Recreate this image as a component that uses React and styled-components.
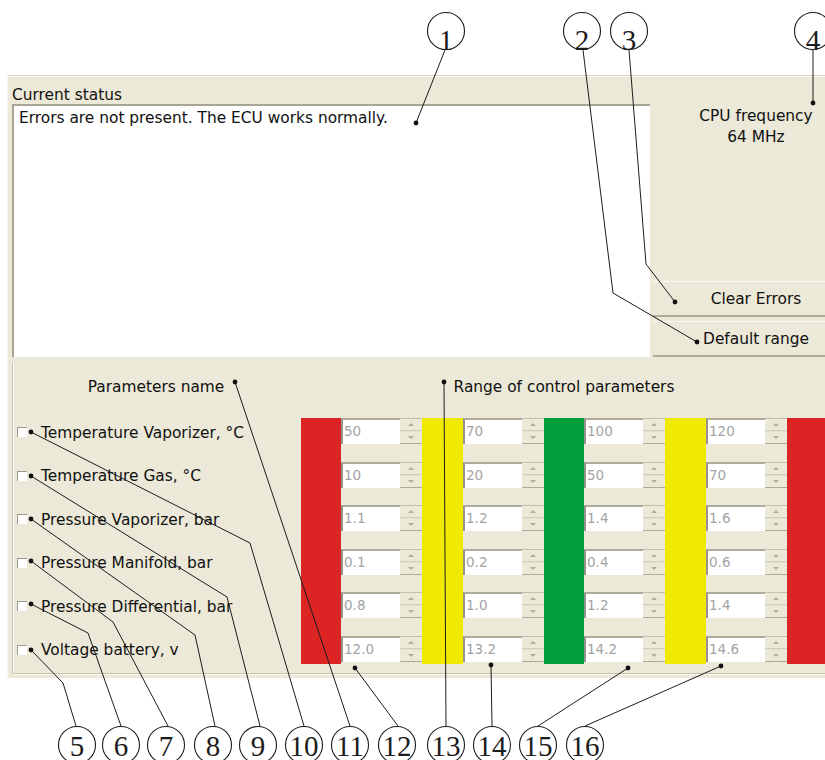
import React from 'react';
import styled, { createGlobalStyle } from 'styled-components';

const GlobalStyle = createGlobalStyle`
  html, body { margin: 0; padding: 0; background: #ffffff; }
  body { font-family: "DejaVu Sans", Verdana, sans-serif; }
`;

const PANEL_BG = '#ECE9D8';

const Page = styled.div`
  position: relative;
  width: 825px;
  height: 760px;
  overflow: hidden;
  background: #ffffff;
  padding-top: 75px;
  box-sizing: border-box;
`;

const Panel = styled.div`
  margin-left: 7px;
  width: 855px;
  height: 603px;
  box-sizing: border-box;
  background: ${PANEL_BG};
  border-top: 1px solid #d6d2bf;
  border-left: 1px solid #f7f6f0;
  box-shadow: inset 0 1px 0 #faf9f2;
  padding: 8px 0 4px 4px;
  display: flex;
  flex-direction: column;
  font-size: 15.4px;
  color: #111;
`;

const Caption = styled.div`
  height: 20px;
  box-sizing: border-box;
  padding-top: 1px;
  line-height: 20px;
`;

const TopRow = styled.div`
  display: flex;
  height: 253px;
`;

const StatusBox = styled.div`
  width: 638px;
  box-sizing: border-box;
  background: #ffffff;
  border-top: 2px solid #a8a597;
  border-left: 2px solid #a8a597;
  padding: 3px 5px;
  line-height: 18px;
`;

const SideColumn = styled.div`
  margin-left: 3px;
  width: 206px;
  display: flex;
  flex-direction: column;
  gap: 4px;
`;

const CpuInfo = styled.div`
  text-align: center;
  line-height: 21px;
  padding-top: 2px;
  margin-bottom: auto;
`;

const SideButton = styled.div`
  height: 36px;
  box-sizing: border-box;
  display: flex;
  align-items: center;
  justify-content: center;
  padding-top: 1px;
  border-top: 1px solid #faf9f3;
  border-bottom: 2px solid #aeaa97;
  background: ${PANEL_BG};
`;

const ParamsGroup = styled.div`
  margin-top: 5px;
  flex: 1;
  border-left: 1px solid #c8c4ae;
  border-bottom: 1px solid #c8c4ae;
  box-shadow: 1px 1px 0 #fbfaf4, inset 1px 0 0 #fbfaf4;
  padding: 16px 0 0 4px;
`;

const HeaderRow = styled.div`
  display: grid;
  grid-template-columns: 278px 526px;
  column-gap: 6px;
  line-height: 18px;
  text-align: center;
  white-space: nowrap;
`;

const ParamGrid = styled.div`
  margin-top: 22px;
  display: grid;
  grid-template-columns: 284px 40px 59px 22px 41px 59px 22px 40px 59px 22px 41px 59px 22px 40px;
  grid-template-rows: repeat(6, 26px);
  row-gap: 17.6px;
`;

const Bar = styled.div`
  grid-row: 1 / -1;
  grid-column: ${(p) => p.$col};
  background: ${(p) => p.$color};
  margin-bottom: -2px;
`;

const ParamLabel = styled.div`
  grid-column: 1;
  grid-row: ${(p) => p.$row};
  display: flex;
  align-items: center;
  gap: 14px;
  padding-top: 3px;
  white-space: nowrap;
`;

const CheckBox = styled.span`
  width: 9px;
  height: 9px;
  flex: none;
  margin-top: -1px;
  background: #ffffff;
  border-top: 1px solid #9c9a92;
  border-left: 1px solid #9c9a92;
`;

const ValueBox = styled.div`
  grid-column: ${(p) => p.$col};
  grid-row: ${(p) => p.$row};
  background: #ffffff;
  border-top: 2px solid #aeab9d;
  border-left: 2px solid #96938a;
  box-sizing: border-box;
  color: #a3a3a3;
  font-size: 13.5px;
  padding-left: 1px;
  line-height: 23px;
`;

const Spin = styled.div`
  grid-column: ${(p) => p.$col};
  grid-row: ${(p) => p.$row};
  display: flex;
  flex-direction: column;
`;

const SpinHalf = styled.div`
  flex: 1;
  display: flex;
  align-items: center;
  justify-content: center;
  border-top: 1px solid ${(p) => (p.$up ? '#c3bfad' : '#e4e1d2')};
  border-bottom: 1px solid ${(p) => (p.$up ? '#d2cebb' : '#aeaa97')};
  background: ${PANEL_BG};
`;

const Arrow = styled.span`
  width: 0;
  height: 0;
  border-left: 3px solid transparent;
  border-right: 3px solid transparent;
  ${(p) => (p.$up ? 'border-bottom: 3px solid #b0ad9e;' : 'border-top: 3px solid #b0ad9e;')}
`;

const Overlay = styled.svg`
  position: absolute;
  left: 0;
  top: 0;
  width: 825px;
  height: 760px;
  pointer-events: none;
`;

const params = [
  { name: 'Temperature Vaporizer, °C', values: ['50', '70', '100', '120'] },
  { name: 'Temperature Gas, °C', values: ['10', '20', '50', '70'] },
  { name: 'Pressure Vaporizer, bar', values: ['1.1', '1.2', '1.4', '1.6'] },
  { name: 'Pressure Manifold, bar', values: ['0.1', '0.2', '0.4', '0.6'] },
  { name: 'Pressure Differential, bar', values: ['0.8', '1.0', '1.2', '1.4'] },
  { name: 'Voltage battery, v', values: ['12.0', '13.2', '14.2', '14.6'] },
];

const bars = [
  { col: 2, color: '#DC2424' },
  { col: 5, color: '#F2E900' },
  { col: 8, color: '#009E3D' },
  { col: 11, color: '#F2E900' },
  { col: 14, color: '#DC2424' },
];

const valueCols = [3, 6, 9, 12];

const circles = [
  { x: 446, y: 31, n: '1', top: true },
  { x: 582, y: 31, n: '2', top: true },
  { x: 629, y: 31, n: '3', top: true },
  { x: 813, y: 31, n: '4', top: true },
  { x: 77, y: 745, n: '5' },
  { x: 121, y: 745, n: '6' },
  { x: 166, y: 745, n: '7' },
  { x: 213, y: 745, n: '8' },
  { x: 258, y: 745, n: '9' },
  { x: 304, y: 745, n: '10' },
  { x: 350, y: 745, n: '11' },
  { x: 397, y: 745, n: '12' },
  { x: 446, y: 745, n: '13' },
  { x: 492, y: 745, n: '14' },
  { x: 538, y: 745, n: '15' },
  { x: 585, y: 745, n: '16' },
];

const leaders = [
  [[445, 50], [416, 123]],
  [[583, 50], [613, 293], [697, 342]],
  [[629, 50], [646, 264], [675, 302]],
  [[813, 50], [813, 103]],
  [[76, 726], [63, 683], [31, 650]],
  [[121, 726], [88, 633], [31, 604]],
  [[168, 726], [113, 622], [31, 561]],
  [[215, 726], [195, 635], [31, 519]],
  [[260, 726], [227, 597], [31, 476]],
  [[304, 726], [250, 543], [31, 432]],
  [[350, 726], [235, 382]],
  [[398, 726], [355, 668]],
  [[446, 726], [444, 382]],
  [[492, 726], [491, 665]],
  [[538, 726], [628, 668]],
  [[585, 726], [721, 666]],
];

function Annotations() {
  return (
    <Overlay viewBox="0 0 825 760">
      {leaders.map((pts, i) => {
        const end = pts[pts.length - 1];
        return (
          <g key={i}>
            <polyline
              points={pts.map((p) => p.join(',')).join(' ')}
              fill="none"
              stroke="#1c1c1c"
              strokeWidth="1"
            />
            <circle cx={end[0]} cy={end[1]} r="2.4" fill="#111" />
          </g>
        );
      })}
      {circles.map((c) => (
        <g key={c.n}>
          <circle cx={c.x} cy={c.y} r="18.5" fill="none" stroke="#1c1c1c" strokeWidth="1.1" />
          <text
            x={c.x}
            y={c.top ? c.y + 19 : c.y + 11}
            textAnchor="middle"
            fontFamily="'Liberation Serif', 'Times New Roman', serif"
            fontSize="29"
            fill="#1c1c1c"
          >
            {c.n}
          </text>
        </g>
      ))}
    </Overlay>
  );
}

export default function App() {
  return (
    <Page>
      <GlobalStyle />
      <Panel>
        <Caption>Current status</Caption>
        <TopRow>
          <StatusBox>Errors are not present. The ECU works normally.</StatusBox>
          <SideColumn>
            <CpuInfo>
              CPU frequency
              <br />
              64 MHz
            </CpuInfo>
            <SideButton>Clear Errors</SideButton>
            <SideButton>Default range</SideButton>
          </SideColumn>
        </TopRow>
        <ParamsGroup>
          <HeaderRow>
            <div>Parameters name</div>
            <div>Range of control parameters</div>
          </HeaderRow>
          <ParamGrid>
            {bars.map((b) => (
              <Bar key={b.col} $col={b.col} $color={b.color} />
            ))}
            {params.map((p, r) => (
              <React.Fragment key={p.name}>
                <ParamLabel $row={r + 1}>
                  <CheckBox />
                  {p.name}
                </ParamLabel>
                {p.values.map((v, i) => (
                  <React.Fragment key={i}>
                    <ValueBox $col={valueCols[i]} $row={r + 1}>{v}</ValueBox>
                    <Spin $col={valueCols[i] + 1} $row={r + 1}>
                      <SpinHalf $up>
                        <Arrow $up />
                      </SpinHalf>
                      <SpinHalf>
                        <Arrow />
                      </SpinHalf>
                    </Spin>
                  </React.Fragment>
                ))}
              </React.Fragment>
            ))}
          </ParamGrid>
        </ParamsGroup>
      </Panel>
      <Annotations />
    </Page>
  );
}
